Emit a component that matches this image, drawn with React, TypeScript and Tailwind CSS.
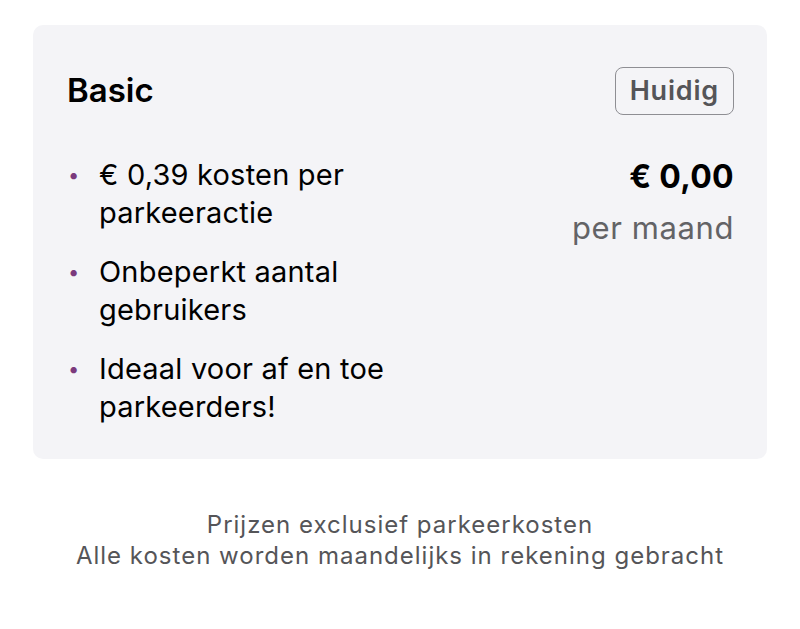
export default function App() {
  const features = [
    '€ 0,39 kosten per parkeeractie',
    'Onbeperkt aantal gebruikers',
    'Ideaal voor af en toe parkeerders!',
  ];

  return (
    <div className="min-h-screen bg-white px-[33px] pt-[25px] font-['Inter',sans-serif]">
      {/* Plan card */}
      <div className="rounded-[10px] bg-[#f4f4f7] pl-[34px] pr-[33px] pt-[41px] pb-[33px]">
        <div className="flex items-center justify-between">
          <h2 className="text-[33px] font-semibold text-black">Basic</h2>
          <span className="rounded-[8px] border border-[#8e8e93] px-[14px] py-[6px] text-[27px] font-semibold leading-[34px] tracking-[0.8px] text-[#555558]">
            Huidig
          </span>
        </div>

        <div className="mt-[40px] flex justify-between">
          <ul className="flex w-[340px] flex-col gap-[21px]">
            {features.map((f, i) => (
              <li key={i} className="flex text-[29px] leading-[38px] tracking-[0.2px] text-black">
                <span className="w-[32px] shrink-0 pl-[1px] text-[20px] text-[#7b3a7d]">•</span>
                <span>{f}</span>
              </li>
            ))}
          </ul>

          <div className="text-right">
            <div className="mt-[2px] text-[32px] font-bold leading-[38px] tracking-[0.3px] text-black">€ 0,00</div>
            <div className="mt-[13px] text-[31px] leading-[38px] tracking-[0.6px] text-[#636366]">per maand</div>
          </div>
        </div>
      </div>

      {/* Footer note */}
      <div className="mt-[50px] text-center text-[24px] leading-[31px] tracking-[1px] text-[#555558]">
        <p>Prijzen exclusief parkeerkosten</p>
        <p>Alle kosten worden maandelijks in rekening gebracht</p>
      </div>
    </div>
  );
}
